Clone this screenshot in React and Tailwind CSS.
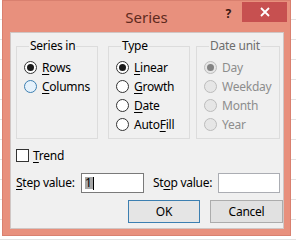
import React from 'react';

const font = "font-['Noto_Sans',sans-serif]";

function Radio({ checked, disabled, hover }) {
  const ring = disabled
    ? 'border-[#bcbcbc] bg-[#e6e6e6]'
    : hover
    ? 'border-[#3c7fb1] bg-[#e5f1fb]'
    : 'border-[#333333] bg-white';
  return (
    <span className={`flex h-[13px] w-[13px] shrink-0 items-center justify-center rounded-full border ${ring}`}>
      {checked && <span className={`h-[7px] w-[7px] rounded-full ${disabled ? 'bg-[#838383]' : 'bg-[#1a1a1a]'}`} />}
    </span>
  );
}

// label with an accelerator key underlined
function Label({ before = '', hot = '', after = '' }) {
  return (
    <span>
      {before}
      {hot && <span className="underline underline-offset-2 decoration-1">{hot}</span>}
      {after}
    </span>
  );
}

function Option({ checked, disabled, hover, children }) {
  return (
    <div className={`flex h-[19px] items-center gap-[5px] ${disabled ? 'text-[#8d8d8d]' : 'text-black'}`}>
      <Radio checked={checked} disabled={disabled} hover={hover} />
      {children}
    </div>
  );
}

function Group({ title, width, disabled, children }) {
  return (
    <fieldset className={`h-[101px] ${width} border border-[#dcdcdc] px-[7px] pt-[4px]`}>
      <legend className={`ml-[5px] px-[1px] leading-[16px] ${disabled ? 'text-[#6d6d6d]' : 'text-black'}`}>{title}</legend>
      {children}
    </fieldset>
  );
}

export default function App() {
  return (
    <div className={`h-[240px] w-[296px] overflow-hidden bg-white bg-[repeating-linear-gradient(to_bottom,transparent_0,transparent_19px,#e3e3e3_19px,#e3e3e3_20px)] ${font} text-[12px] tracking-[-0.25px]`}>
      <div className="ml-[2px] flex h-[236px] w-[289px] flex-col border border-[#d9806f] bg-[#e8907d]">
        {/* title bar */}
        <div className="relative flex h-[31px] shrink-0 items-start justify-end">
          <span className="absolute left-0 right-0 top-[5px] text-center text-[15px] tracking-normal text-[#5e2a20]">Series</span>
          <span className="mr-[11px] mt-[4px] text-[12px] font-bold text-[#3a1812]">?</span>
          <button className="mr-[3px] mt-[1px] flex h-[20px] w-[45px] items-center justify-center bg-[#c75050]">
            <svg width="10" height="10" viewBox="0 0 10 10">
              <path d="M1 1 L9 9 M9 1 L1 9" stroke="white" strokeWidth="1.8" />
            </svg>
          </button>
        </div>

        {/* client area */}
        <div className="mb-[6px] ml-[7px] mr-[6px] flex flex-1 flex-col border border-[#d0c6c4] bg-[#f0f0f0] pl-[5px] pt-[5px]">
          <div className="flex">
            <Group title="Series in" width="w-[82px]">
              <Option checked>
                <Label hot="R" after="ows" />
              </Option>
              <Option hover>
                <Label hot="C" after="olumns" />
              </Option>
            </Group>
            <div className="ml-[10px]">
              <Group title="Type" width="w-[82px]">
                <Option checked>
                  <Label hot="L" after="inear" />
                </Option>
                <Option>
                  <Label hot="G" after="rowth" />
                </Option>
                <Option>
                  <Label hot="D" after="ate" />
                </Option>
                <Option>
                  <Label before="Auto" hot="F" after="ill" />
                </Option>
              </Group>
            </div>
            <div className="ml-[6px]">
              <Group title="Date unit" width="w-[84px]" disabled>
                <Option checked disabled>Day</Option>
                <Option disabled>Weekday</Option>
                <Option disabled>Month</Option>
                <Option disabled>Year</Option>
              </Group>
            </div>
          </div>

          {/* trend */}
          <div className="mt-[10px] flex h-[13px] items-center gap-[4px]">
            <span className="h-[13px] w-[13px] border border-[#333333] bg-white" />
            <Label hot="T" after="rend" />
          </div>

          {/* step / stop */}
          <div className="mt-[11px] flex h-[20px] items-center">
            <span className="w-[65px]">
              <Label hot="S" after="tep value:" />
            </span>
            <div className="flex h-[20px] w-[63px] items-center border border-[#7a7a7a] bg-white pl-[3px]">
              <span className="bg-[#a6a6a6] pr-[1px] leading-[12px] text-black">1</span>
              <span className="h-[13px] w-[1px] bg-black" />
            </div>
            <span className="ml-[9px] w-[65px]">
              <Label before="St" hot="o" after="p value:" />
            </span>
            <div className="h-[20px] w-[62px] border border-[#abadb3] bg-white" />
          </div>

          {/* buttons */}
          <div className="ml-[112px] mt-[7px] flex gap-[10px]">
            <button className="h-[23px] w-[73px] border border-[#3c7fb1] bg-[#e5e5e5] text-black">OK</button>
            <button className="h-[23px] w-[74px] border border-[#acacac] bg-[#e1e1e1] text-black">Cancel</button>
          </div>
        </div>
      </div>
    </div>
  );
}
